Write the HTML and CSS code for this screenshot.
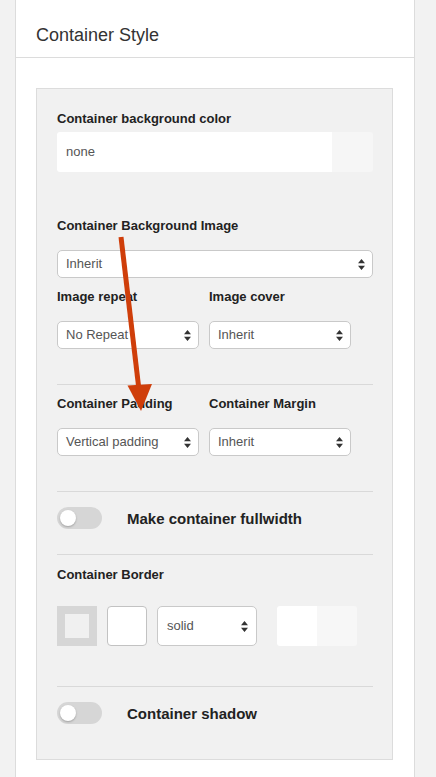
FILE: index.html
```html
<!DOCTYPE html>
<html>
<head>
<meta charset="utf-8">
<link rel="stylesheet" href="styles.css">
</head>
<body>
<div class="panel">
  <div class="panel-head">Container Style</div>
  <div class="panel-body">
    <div class="box">
      <div class="label">Container background color</div>
      <div class="color-input"><span class="ci-text">none</span><span class="ci-swatch"></span></div>

      <div class="label l-bgimg">Container Background Image</div>
      <div class="select full s-bgimg"><span>Inherit</span><svg class="caret" width="7" height="11" viewBox="0 0 7 11"><path d="M3.5 0L7 4.2H0z M3.5 11L7 6.8H0z" fill="#333"/></svg></div>

      <div class="row2 r-labels">
        <div class="label">Image repeat</div>
        <div class="label">Image cover</div>
      </div>
      <div class="row2 r-selects">
        <div class="select"><span>No Repeat</span><svg class="caret" width="7" height="11" viewBox="0 0 7 11"><path d="M3.5 0L7 4.2H0z M3.5 11L7 6.8H0z" fill="#333"/></svg></div>
        <div class="select"><span>Inherit</span><svg class="caret" width="7" height="11" viewBox="0 0 7 11"><path d="M3.5 0L7 4.2H0z M3.5 11L7 6.8H0z" fill="#333"/></svg></div>
      </div>

      <div class="divider d1"></div>

      <div class="row2 r-labels2">
        <div class="label">Container Padding</div>
        <div class="label">Container Margin</div>
      </div>
      <div class="row2 r-selects">
        <div class="select"><span>Vertical padding</span><svg class="caret" width="7" height="11" viewBox="0 0 7 11"><path d="M3.5 0L7 4.2H0z M3.5 11L7 6.8H0z" fill="#333"/></svg></div>
        <div class="select"><span>Inherit</span><svg class="caret" width="7" height="11" viewBox="0 0 7 11"><path d="M3.5 0L7 4.2H0z M3.5 11L7 6.8H0z" fill="#333"/></svg></div>
      </div>

      <div class="divider d2"></div>

      <div class="toggle-row t1">
        <span class="toggle"><span class="knob"></span></span>
        <span class="toggle-text">Make container fullwidth</span>
      </div>

      <div class="divider d3"></div>

      <div class="label l-border">Container Border</div>
      <div class="border-row">
        <span class="border-icon"><span class="border-icon-inner"></span></span>
        <span class="border-width"></span>
        <div class="select s-style"><span>solid</span><svg class="caret" width="7" height="11" viewBox="0 0 7 11"><path d="M3.5 0L7 4.2H0z M3.5 11L7 6.8H0z" fill="#333"/></svg></div>
        <span class="border-color"><span class="bc-white"></span><span class="bc-grey"></span></span>
      </div>

      <div class="divider d4"></div>

      <div class="toggle-row t2">
        <span class="toggle"><span class="knob"></span></span>
        <span class="toggle-text">Container shadow</span>
      </div>
    </div>
  </div>
</div>

<svg class="annot" width="436" height="777" viewBox="0 0 436 777">
  <line x1="121" y1="237" x2="139" y2="390" stroke="#cf3e0a" stroke-width="5"/>
  <path d="M127.5 385.5 L152 384 L141 411 Z" fill="#cf3e0a"/>
</svg>
</body>
</html>
```

FILE: styles.css
```css
html, body {
  margin: 0;
  padding: 0;
}
body {
  background: #f2f2f2;
  font-family: "Liberation Sans", Arial, sans-serif;
  color: #222;
  height: 777px;
  overflow: hidden;
  position: relative;
}
.panel {
  margin-left: 15px;
  width: 398px;
  height: 777px;
  background: #fff;
  border-left: 1px solid #dcdcdc;
  border-right: 1px solid #dcdcdc;
}
.panel-head {
  height: 58px;
  box-sizing: border-box;
  padding: 25px 0 0 20px;
  font-size: 18px;
  line-height: 20px;
  color: #333;
  border-bottom: 1px solid #dcdcdc;
}
.panel-body {
  padding: 30px 0 0 20px;
}
.box {
  box-sizing: border-box;
  width: 357px;
  background: #f1f1f1;
  border: 1px solid #dcdcdc;
  padding: 22px 19px 35px 20px;
}
.label {
  font-size: 13px;
  font-weight: bold;
  line-height: 16px;
  color: #222;
}
.color-input {
  display: flex;
  margin-top: 5px;
  height: 40px;
  border-radius: 3px;
  overflow: hidden;
}
.ci-text {
  flex: 1;
  background: #fff;
  font-size: 13px;
  line-height: 40px;
  padding-left: 9px;
  color: #555;
}
.ci-swatch {
  width: 41px;
  background: #f6f6f6;
}
.l-bgimg {
  margin-top: 46px;
}
.select {
  position: relative;
  box-sizing: border-box;
  height: 28px;
  width: 142px;
  background: #fff;
  border: 1px solid #c9c9c9;
  border-radius: 5px;
  font-size: 13px;
  line-height: 26px;
  padding-left: 8px;
  color: #555;
  display: flex;
  align-items: center;
  justify-content: space-between;
  padding-right: 7px;
}
.select span {
  line-height: 26px;
}
.caret {
  display: block;
}
.select.full {
  width: 316px;
}
.s-bgimg {
  margin-top: 16px;
}
.row2 {
  display: flex;
  gap: 10px;
}
.row2 > * {
  width: 142px;
}
.r-labels {
  margin-top: 11px;
}
.r-labels2 {
  margin-top: 11px;
}
.r-selects {
  margin-top: 16px;
}
.divider {
  height: 1px;
  background: #d9d9d9;
  width: 316px;
}
.d1 { margin-top: 35px; }
.d2 { margin-top: 35px; }
.d3 { margin-top: 25px; }
.d4 { margin-top: 40px; }
.toggle-row {
  display: flex;
  align-items: center;
  margin-top: 15px;
  height: 22px;
}
.toggle {
  width: 45px;
  height: 22px;
  border-radius: 11px;
  background: #d6d6d6;
  position: relative;
  flex: none;
}
.knob {
  position: absolute;
  left: 3px;
  top: 3px;
  width: 16px;
  height: 16px;
  border-radius: 50%;
  background: #fff;
  box-shadow: 0 1px 2px rgba(0,0,0,0.25);
}
.toggle-text {
  margin-left: 25px;
  font-size: 15px;
  font-weight: bold;
  color: #222;
}
.l-border {
  margin-top: 12px;
}
.border-row {
  display: flex;
  margin-top: 23px;
  height: 40px;
}
.border-icon {
  width: 40px;
  height: 40px;
  background: #d6d6d6;
  display: flex;
  align-items: center;
  justify-content: center;
  flex: none;
}
.border-icon-inner {
  width: 24px;
  height: 24px;
  background: #f0f0f0;
}
.border-width {
  margin-left: 10px;
  width: 40px;
  height: 40px;
  box-sizing: border-box;
  background: #fff;
  border: 1px solid #c2c2c2;
  border-radius: 4px;
  flex: none;
}
.select.s-style {
  margin-left: 10px;
  width: 100px;
  height: 40px;
  padding-left: 9px;
  padding-right: 8px;
}
.border-color {
  margin-left: 20px;
  width: 80px;
  height: 40px;
  display: flex;
  border-radius: 3px;
  overflow: hidden;
}
.bc-white {
  width: 40px;
  background: #fff;
}
.bc-grey {
  width: 40px;
  background: #f7f7f7;
}
.annot {
  position: absolute;
  left: 0;
  top: 0;
  pointer-events: none;
}
```
